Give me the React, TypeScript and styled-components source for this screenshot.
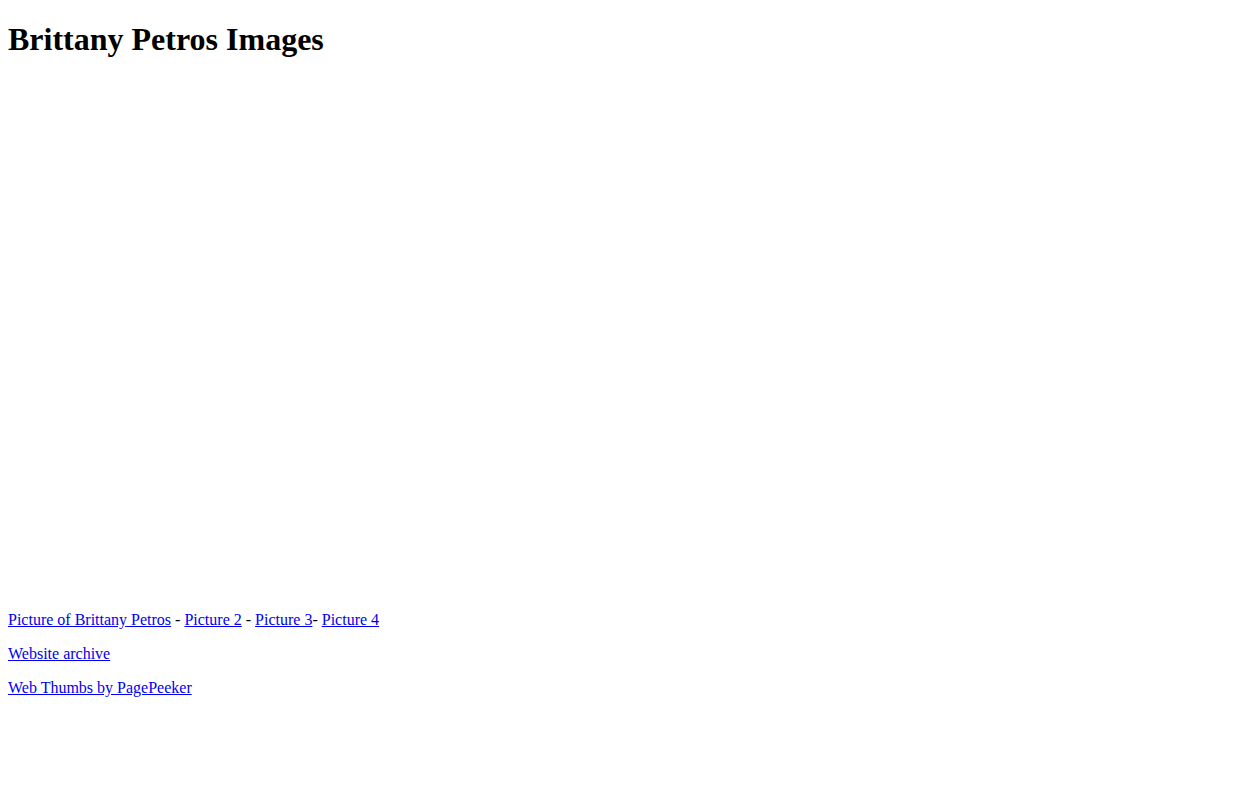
import styled, { createGlobalStyle } from "styled-components";

const GlobalStyle = createGlobalStyle`
  body {
    margin: 8px;
    font-family: "Liberation Serif", "Times New Roman", serif;
    font-size: 16px;
    color: #000;
    background: #fff;
  }
`;

const Title = styled.h1`
  font-size: 2em;
  font-weight: bold;
  margin: 13.44px 0 21.44px;
`;

// the picture slot, empty in the capture
const PictureSlot = styled.div`
  height: 515px;
`;

const Line = styled.p`
  margin: 16px 0;
`;

const Link = styled.a`
  color: #0000ee;
  text-decoration: underline;
`;

export default function App() {
  return (
    <>
      <GlobalStyle />
      <Title>Brittany Petros Images</Title>
      <PictureSlot />
      <Line>
        <Link href="#">Picture of Brittany Petros</Link> -{" "}
        <Link href="#">Picture 2</Link> - <Link href="#">Picture 3</Link>-{" "}
        <Link href="#">Picture 4</Link>
      </Line>
      <Line>
        <Link href="#">Website archive</Link>
      </Line>
      <Line>
        <Link href="#">Web Thumbs by PagePeeker</Link>
      </Line>
    </>
  );
}
